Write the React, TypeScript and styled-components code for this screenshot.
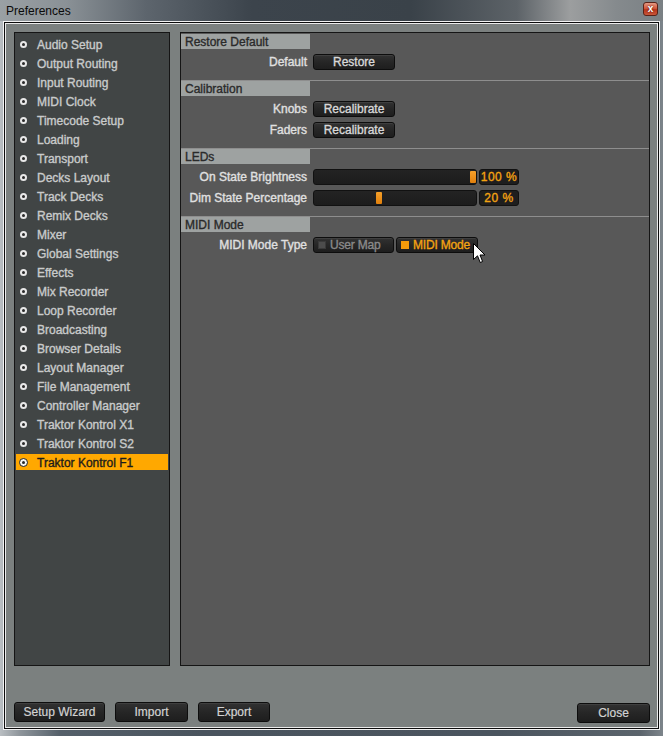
import React from 'react';
import styled, { createGlobalStyle, css } from 'styled-components';

const GlobalStyle = createGlobalStyle`
  html, body {
    margin: 0;
    padding: 0;
    background: #4a545e;
  }
  * {
    box-sizing: border-box;
  }
`;

// the app font is a semi-bold grotesque, regular + a thin stroke gets close
const uiText = (color: string) => css`
  font-family: "Liberation Sans", Arial, sans-serif;
  font-size: 12px;
  font-weight: normal;
  color: ${color};
  -webkit-text-stroke: 0.35px ${color};
`;

const Window = styled.div`
  width: 663px;
  height: 736px;
  display: flex;
  flex-direction: column;
  font-family: "Liberation Sans", Arial, sans-serif;
  background: linear-gradient(90deg, #b9bec2 0px, #8e959b 20px, #55606a 60px, #4a545e 200px, #4b555f 500px, #5b646c 640px, #7d858b 663px);
  position: relative;
  overflow: hidden;
`;

const TitleBar = styled.div`
  height: 21px;
  flex-shrink: 0;
  display: flex;
  align-items: center;
  justify-content: space-between;
  padding: 0 5px 0 6px;
  background: linear-gradient(90deg, #9aa0a4 0%, #8a9196 10%, #5d656d 22%, #3c444c 38%, #3a4249 62%, #5d6368 78%, #9c9e9f 86%, #858a8d 93%, #7a8084 100%);
`;

const TitleText = styled.span`
  font-family: "Liberation Sans", Arial, sans-serif;
  font-size: 12px;
  color: #0a0a0a;
  margin-top: 1px;
`;

const CloseBox = styled.div`
  width: 15px;
  height: 14px;
  margin-top: -4px;
  border: 1px solid #5a2218;
  border-radius: 3px;
  background: linear-gradient(180deg, #e49a85 0%, #d2573c 45%, #b8361c 55%, #c9563a 100%);
  display: flex;
  align-items: center;
  justify-content: center;
  color: #fff;
  font-size: 10px;
  font-weight: bold;
  line-height: 1;
  text-shadow: 0 0 2px #400;
`;

const Frame = styled.div`
  flex: 1;
  margin: 0 3px 6px 3px;
  border: 1px solid #f2f2f2;
  box-shadow: inset 0 0 0 1px #0c0c0c, inset 0 0 0 2px #eaeaea;
  background: #7b807f;
  padding: 10px 9px 7px 10px;
  display: flex;
  flex-direction: column;
`;

const Panels = styled.div`
  height: 634px;
  display: flex;
  gap: 10px;
`;

const Sidebar = styled.ul`
  list-style: none;
  margin: 0;
  width: 156px;
  flex-shrink: 0;
  background: #414545;
  border: 1px solid #151515;
  padding: 3px 1px 0 1px;
  display: flex;
  flex-direction: column;
  gap: 3px;
`;

const NavItem = styled.li<{ $active?: boolean }>`
  height: 16px;
  display: flex;
  align-items: center;
  padding-left: 4px;
  gap: 10px;
  ${p => uiText(p.$active ? '#1c1c1c' : '#c9cbcb')};
  background: ${p => (p.$active ? '#ffa800' : 'transparent')};
`;

const NavText = styled.span`
  padding-top: 1px;
`;

const BulletSlot = styled.span`
  width: 9px;
  height: 9px;
  flex-shrink: 0;
  display: flex;
  align-items: center;
  justify-content: center;
  margin-left: -1px;
  margin-right: -1px;
`;

const Bullet = styled.span<{ $active?: boolean }>`
  width: ${p => (p.$active ? 9 : 7)}px;
  height: ${p => (p.$active ? 9 : 7)}px;
  border-radius: 50%;
  flex-shrink: 0;
  background: ${p => (p.$active ? '#f4f4f4' : '#e8e8e8')};
  border: ${p => (p.$active ? '1px solid #222' : 'none')};
  display: flex;
  align-items: center;
  justify-content: center;
  -webkit-text-stroke: 0;

  &::after {
    content: '';
    width: 3px;
    height: 3px;
    border-radius: 50%;
    background: #2a2a2a;
  }
`;

const Content = styled.div`
  flex: 1;
  background: #585858;
  border: 1px solid #151515;
  padding-top: 1px;
  display: flex;
  flex-direction: column;
`;

const Section = styled.section<{ $first?: boolean }>`
  border-top: ${p => (p.$first ? 'none' : '1px solid #8e8e8e')};
  display: flex;
  flex-direction: column;
`;

const SectionHeader = styled.div`
  width: 129px;
  height: 15px;
  background: #9ea2a1;
  ${uiText('#2a2a2a')};
  padding-left: 4px;
  display: flex;
  align-items: center;
`;

const SectionBody = styled.div`
  padding: 5px 0 10px 0;
  display: flex;
  flex-direction: column;
  gap: 5px;
`;

const Row = styled.div`
  display: grid;
  grid-template-columns: 126px auto;
  column-gap: 6px;
  align-items: center;
  height: 16px;
`;

const Label = styled.span`
  text-align: right;
  ${uiText('#e0e0e0')};
  white-space: nowrap;
`;

const Controls = styled.div`
  display: flex;
  gap: 2px;
  height: 16px;
`;

const DarkButton = styled.div<{ $w?: number; $h?: number }>`
  width: ${p => p.$w ?? 82}px;
  height: ${p => p.$h ?? 16}px;
  border: 1px solid #0d0d0d;
  border-radius: 3px;
  background: linear-gradient(180deg, #323232 0%, #262626 50%, #1e1e1e 100%);
  box-shadow: inset 0 1px 0 rgba(255, 255, 255, 0.07);
  ${uiText('#d8d8d8')};
  display: flex;
  align-items: center;
  justify-content: center;
  white-space: nowrap;
`;

const Track = styled.div`
  width: 164px;
  height: 16px;
  border: 1px solid #111;
  border-radius: 3px;
  background: linear-gradient(180deg, #232323 0%, #1c1c1c 100%);
  position: relative;
`;

const Thumb = styled.div`
  position: absolute;
  top: 1px;
  width: 6px;
  height: 12px;
  background: linear-gradient(180deg, #f5a02a 0%, #e2800c 100%);
  border-radius: 1px;
`;

const ValueBox = styled.div`
  width: 40px;
  height: 16px;
  border: 1px solid #111;
  border-radius: 3px;
  background: #1e1e1e;
  ${uiText('#f3a312')};
  letter-spacing: 0.5px;
  display: flex;
  align-items: center;
  justify-content: center;
`;

const ModeButton = styled(DarkButton)<{ $on?: boolean }>`
  justify-content: flex-start;
  padding-left: 4px;
  gap: 4px;
  ${p => uiText(p.$on ? '#f3a312' : '#8a8a8a')};
  letter-spacing: -0.2px;
`;

const ModeLed = styled.span<{ $on?: boolean }>`
  width: 8px;
  height: 8px;
  flex-shrink: 0;
  background: ${p => (p.$on ? '#f39a0a' : '#4c4c4c')};
  border: 1px solid ${p => (p.$on ? '#f39a0a' : '#3a3a3a')};
`;

const Footer = styled.div`
  margin-top: auto;
  display: flex;
  align-items: flex-end;
  gap: 10px;
`;

const FooterButton = styled(DarkButton)`
  ${uiText('#d2d2d2')};
  -webkit-text-stroke: 0.2px #d2d2d2;
`;

const CloseButton = styled(FooterButton)`
  margin-left: auto;
  margin-bottom: -1px;
`;

const Cursor = styled.svg`
  position: absolute;
  left: 473px;
  top: 243px;
`;

const navItems = [
  'Audio Setup',
  'Output Routing',
  'Input Routing',
  'MIDI Clock',
  'Timecode Setup',
  'Loading',
  'Transport',
  'Decks Layout',
  'Track Decks',
  'Remix Decks',
  'Mixer',
  'Global Settings',
  'Effects',
  'Mix Recorder',
  'Loop Recorder',
  'Broadcasting',
  'Browser Details',
  'Layout Manager',
  'File Management',
  'Controller Manager',
  'Traktor Kontrol X1',
  'Traktor Kontrol S2',
  'Traktor Kontrol F1',
];

const sliders = [
  { label: 'On State Brightness', value: '100 %', pos: 1 },
  { label: 'Dim State Percentage', value: '20 %', pos: 0.4 },
];

const TRACK_RANGE = 156;

const App: React.FC = () => {
  const active = 'Traktor Kontrol F1';

  return (
    <Window>
      <GlobalStyle />
      <TitleBar>
        <TitleText>Preferences</TitleText>
        <CloseBox>x</CloseBox>
      </TitleBar>
      <Frame>
        <Panels>
          <Sidebar>
            {navItems.map(item => (
              <NavItem key={item} $active={item === active}>
                <BulletSlot>
                  <Bullet $active={item === active} />
                </BulletSlot>
                <NavText>{item}</NavText>
              </NavItem>
            ))}
          </Sidebar>

          <Content>
            <Section $first>
              <SectionHeader>Restore Default</SectionHeader>
              <SectionBody>
                <Row>
                  <Label>Default</Label>
                  <Controls>
                    <DarkButton>Restore</DarkButton>
                  </Controls>
                </Row>
              </SectionBody>
            </Section>

            <Section>
              <SectionHeader>Calibration</SectionHeader>
              <SectionBody>
                <Row>
                  <Label>Knobs</Label>
                  <Controls>
                    <DarkButton>Recalibrate</DarkButton>
                  </Controls>
                </Row>
                <Row>
                  <Label>Faders</Label>
                  <Controls>
                    <DarkButton>Recalibrate</DarkButton>
                  </Controls>
                </Row>
              </SectionBody>
            </Section>

            <Section>
              <SectionHeader>LEDs</SectionHeader>
              <SectionBody>
                {sliders.map(s => (
                  <Row key={s.label}>
                    <Label>{s.label}</Label>
                    <Controls>
                      <Track>
                        <Thumb style={{ left: Math.round(s.pos * TRACK_RANGE) }} />
                      </Track>
                      <ValueBox>{s.value}</ValueBox>
                    </Controls>
                  </Row>
                ))}
              </SectionBody>
            </Section>

            <Section>
              <SectionHeader>MIDI Mode</SectionHeader>
              <SectionBody>
                <Row>
                  <Label>MIDI Mode Type</Label>
                  <Controls>
                    <ModeButton $w={81}>
                      <ModeLed />
                      User Map
                    </ModeButton>
                    <ModeButton $w={82} $on>
                      <ModeLed $on />
                      MIDI Mode
                    </ModeButton>
                  </Controls>
                </Row>
              </SectionBody>
            </Section>
          </Content>
        </Panels>

        <Footer>
          <FooterButton $w={91} $h={20}>Setup Wizard</FooterButton>
          <FooterButton $w={73} $h={20}>Import</FooterButton>
          <FooterButton $w={72} $h={20}>Export</FooterButton>
          <CloseButton $w={73} $h={20}>Close</CloseButton>
        </Footer>
      </Frame>

      <Cursor width="13" height="21" viewBox="0 0 13 21">
        <path
          d="M0.5 0.5 L0.5 16.5 L4.5 12.8 L7.2 19.5 L9.6 18.5 L7 12 L12 12 Z"
          fill="#ffffff"
          stroke="#000000"
          strokeWidth="1"
          strokeLinejoin="miter"
        />
      </Cursor>
    </Window>
  );
};

export default App;
